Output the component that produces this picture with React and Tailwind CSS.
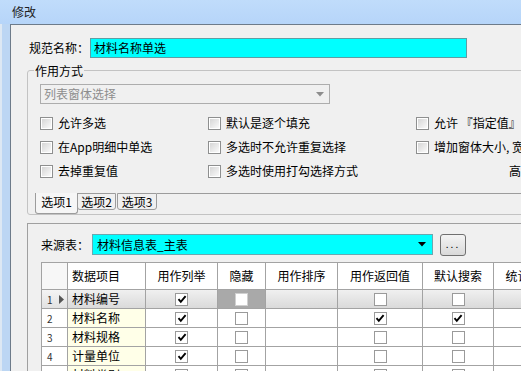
import React from 'react';

const FormCheck = () => (
  <span className="w-[13px] h-[13px] shrink-0 border border-[#8e8f8f] bg-white flex p-px">
    <span className="flex-1 bg-gradient-to-br from-[#d6d6d6] to-[#fafafa]" />
  </span>
);

const CheckItem = ({ label }) => (
  <div className="flex items-center gap-[5px] whitespace-nowrap">
    <FormCheck />
    <span className="leading-[16px]">{label}</span>
  </div>
);

const GridCheck = ({ checked, dark }) => (
  <span
    className={`w-[13px] h-[13px] border ${dark ? 'border-[#d0d0d0]' : 'border-[#9a9a9a]'} bg-white flex items-center justify-center`}
  >
    {checked && (
      <svg width="10" height="9" viewBox="0 0 10 9">
        <path d="M1.5 4.2 L3.8 6.8 L8.6 1.2" stroke="#000" strokeWidth="1.9" fill="none" />
      </svg>
    )}
  </span>
);

const rows = [
  { n: 1, name: '材料编号', list: true, hide: false, ret: false, search: false, sel: true },
  { n: 2, name: '材料名称', list: true, hide: false, ret: true, search: true },
  { n: 3, name: '材料规格', list: true, hide: false, ret: false, search: false },
  { n: 4, name: '计量单位', list: true, hide: false, ret: false, search: false },
  { n: 5, name: '材料类别', list: true, hide: false, ret: false, search: false },
];

const line = 'border-r border-b border-[#a3a3a3]';

export default function App() {
  return (
    <div className="w-[521px] h-[371px] overflow-hidden bg-[#bad7f8] [font-family:'Noto_Sans_CJK_SC',sans-serif] text-[12px] text-black flex flex-col">
      <div className="h-[24px] shrink-0 flex items-center pl-[12px] text-[#1e1e1e] leading-none bg-gradient-to-b from-[#c0dcfb] to-[#b6d5f9]">
        修改
      </div>
      <div className="flex flex-1 min-h-0">
        <div className="w-[10px] shrink-0 border-l-[2px] border-[#dde8f3] bg-[#bcd6f3]" />
        <div className="flex-1 min-w-0 overflow-hidden bg-[#f0f0f0] border-l border-t border-[#6d7b8a] flex flex-col">
          {/* name row */}
          <div className="flex items-center mt-[13px] pl-[18px] h-[20px] shrink-0">
            <span className="w-[61px] leading-[16px] whitespace-nowrap">规范名称：</span>
            <div className="w-[377px] h-[20px] bg-[#00ffff] border border-[#5e9ea4] pl-[3px] flex items-center">
              材料名称单选
            </div>
          </div>

          {/* group box */}
          <div className="relative mt-[12px] ml-[16px] w-[620px] h-[145px] shrink-0 border border-[#c3c3c3] rounded-[3px] flex flex-col">
            <span className="absolute left-[6px] top-[-8px] bg-[#f0f0f0] px-px leading-[16px]">作用方式</span>
            <div className="ml-[12px] mt-[13px] w-[290px] h-[20px] border border-[#adadad] flex items-center justify-between pl-[3px] pr-[5px] text-[#8d8d8d]">
              <span>列表窗体选择</span>
              <svg width="8" height="5" viewBox="0 0 8 5">
                <path d="M0 0 H8 L4 4.5 Z" fill="#8d8d8d" />
              </svg>
            </div>
            <div className="mt-[7px] pl-[12px] grid grid-cols-[168px_208px_240px] grid-rows-[24px_24px_24px]">
              <CheckItem label="允许多选" />
              <CheckItem label="默认是逐个填充" />
              <CheckItem label="允许 『指定值』为空" />
              <CheckItem label="在App明细中单选" />
              <CheckItem label="多选时不允许重复选择" />
              <CheckItem label="增加窗体大小, 宽度" />
              <CheckItem label="去掉重复值" />
              <CheckItem label="多选时使用打勾选择方式" />
              <div className="flex items-center pl-[93px] whitespace-nowrap">
                <span className="leading-[16px]">高度</span>
              </div>
            </div>
            <div className="mt-[10px] ml-[7px] flex items-start">
              <div className="w-[43px] h-[21px] border-x border-b border-[#9c9c9c] rounded-b-[3px] bg-[#f6f6f6] flex justify-center pt-px leading-[16px]">
                选项1
              </div>
              <div className="w-[39px] h-[17px] border border-[#9c9c9c] rounded-b-[3px] flex justify-center leading-[15px] -ml-px">
                选项2
              </div>
              <div className="w-[40px] h-[17px] border border-[#9c9c9c] rounded-b-[3px] flex justify-center leading-[15px] ml-px">
                选项3
              </div>
              <div className="flex-1 border-t border-[#9c9c9c]" />
            </div>
          </div>

          {/* bottom panel */}
          <div className="mt-[8px] ml-[16px] w-[620px] flex-1 border-l border-t border-[#a0a0a0] pl-[13px] flex flex-col">
            <div className="flex items-center mt-[10px] h-[21px] shrink-0">
              <span className="w-[51px] leading-[16px] whitespace-nowrap">来源表：</span>
              <div className="w-[341px] h-[21px] bg-[#00ffff] border border-[#6aa8b0] pl-[4px] pr-[6px] flex items-center justify-between">
                <span>材料信息表_主表</span>
                <svg width="8" height="5" viewBox="0 0 8 5">
                  <path d="M0 0 H8 L4 4.5 Z" fill="#000" />
                </svg>
              </div>
              <div className="ml-[7px] w-[26px] h-[22px] rounded-[3px] border border-[#707070] bg-gradient-to-b from-[#f4f4f4] to-[#d9d9d9] flex items-center justify-center text-[10px] tracking-[2px] leading-none pb-[2px]">
                ...
              </div>
            </div>

            <div className="mt-[7px] grid grid-cols-[26px_78px_72px_48px_72px_85px_71px_72px] grid-rows-[27px] auto-rows-[19px] border-l border-t border-[#a3a3a3] w-max">
              {/* header */}
              <div className={`${line} bg-[#f7f7f7]`} />
              <div className={`${line} bg-white flex items-center pl-[4px]`}>数据项目</div>
              <div className={`${line} bg-white flex items-center justify-center`}>用作列举</div>
              <div className={`${line} bg-white flex items-center justify-center`}>隐藏</div>
              <div className={`${line} bg-white flex items-center justify-center`}>用作排序</div>
              <div className={`${line} bg-white flex items-center justify-center`}>用作返回值</div>
              <div className={`${line} bg-white flex items-center justify-center`}>默认搜索</div>
              <div className={`${line} bg-white flex items-center justify-center whitespace-nowrap`}>统计方式</div>

              {rows.map((r) => {
                const bg = r.sel ? 'bg-gradient-to-b from-[#f0f0f0] to-[#dadada]' : 'bg-white';
                const nameBg = r.sel ? 'bg-gradient-to-b from-[#f0f0f0] to-[#dadada]' : 'bg-[#ffffe8]';
                return (
                  <React.Fragment key={r.n}>
                    <div className={`${line} ${r.sel ? 'bg-gradient-to-b from-[#f4f4f4] to-[#e2e2e2]' : 'bg-white'} flex items-center justify-between pl-[5px] pr-[3px] text-[10px] text-[#333]`}>
                      <span>{r.n}</span>
                      {r.sel && (
                        <svg width="5" height="9" viewBox="0 0 5 9">
                          <path d="M0 0 L5 4.5 L0 9 Z" fill="#555" />
                        </svg>
                      )}
                    </div>
                    <div className={`${line} ${nameBg} flex items-center pl-[4px] whitespace-nowrap`}>{r.name}</div>
                    <div className={`${line} ${bg} flex items-center justify-center`}>
                      <GridCheck checked={r.list} />
                    </div>
                    <div className={`${line} ${r.sel ? 'bg-[#a9a9a9]' : 'bg-white'} flex items-center justify-center`}>
                      <GridCheck checked={r.hide} dark={r.sel} />
                    </div>
                    <div className={`${line} ${bg}`} />
                    <div className={`${line} ${bg} flex items-center justify-center`}>
                      <GridCheck checked={r.ret} />
                    </div>
                    <div className={`${line} ${bg} flex items-center justify-center`}>
                      <GridCheck checked={r.search} />
                    </div>
                    <div className={`${line} ${bg}`} />
                  </React.Fragment>
                );
              })}
            </div>
          </div>
        </div>
      </div>
    </div>
  );
}
